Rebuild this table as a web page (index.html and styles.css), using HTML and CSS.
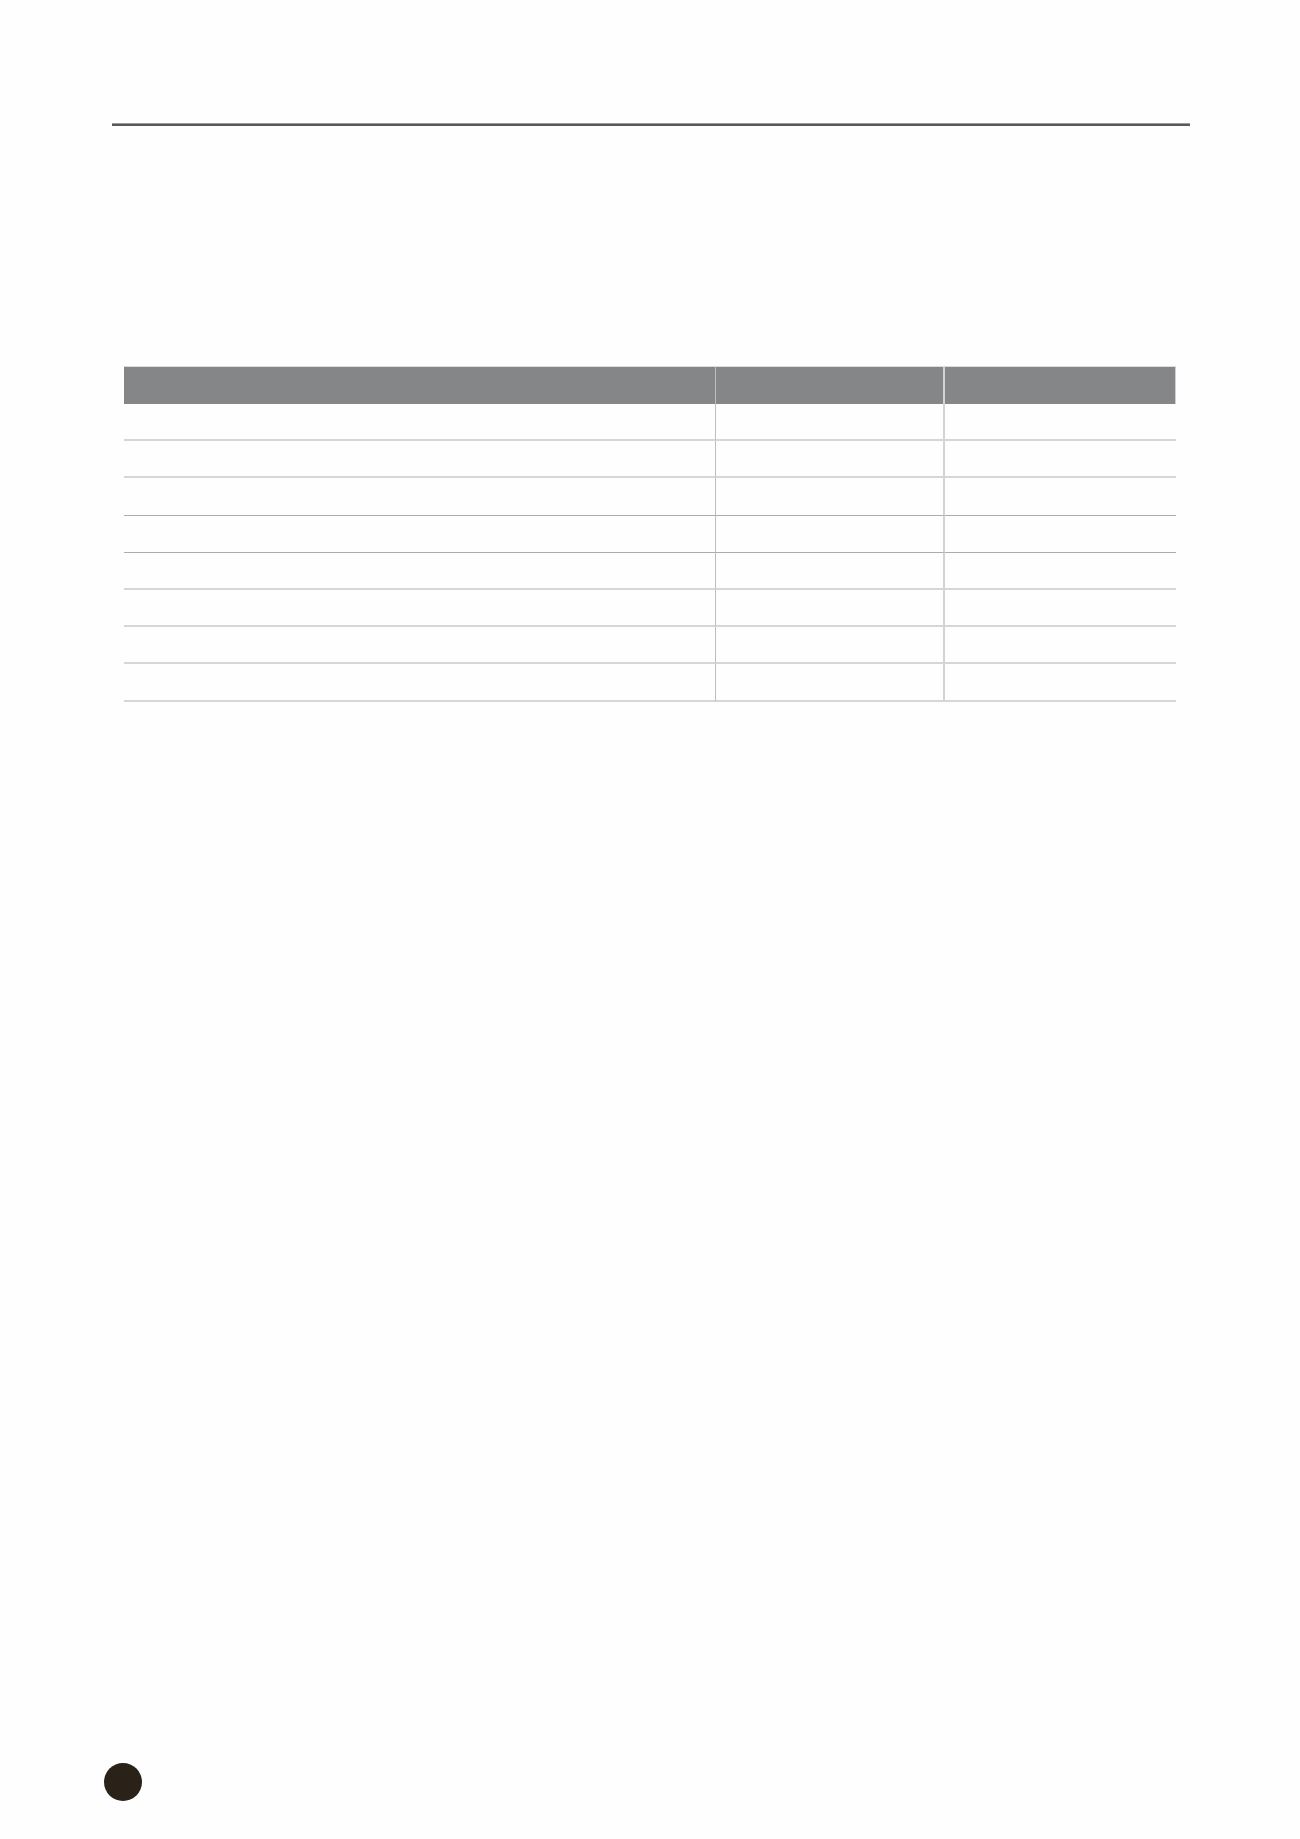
FILE: index.html
```html
<!DOCTYPE html>
<html lang="en">
<head>
<meta charset="utf-8">
<title>Page</title>
<link rel="stylesheet" href="styles.css">
</head>
<body>
<div class="page">
  <div class="top-rule"></div>
  <table class="data-table">
    <thead>
      <tr><th class="c1"></th><th class="c2"></th><th class="c3"></th></tr>
    </thead>
    <tbody>
      <tr><td class="c1"></td><td class="c2"></td><td class="c3"></td></tr>
      <tr><td class="c1"></td><td class="c2"></td><td class="c3"></td></tr>
      <tr class="dark"><td class="c1"></td><td class="c2"></td><td class="c3"></td></tr>
      <tr class="dark"><td class="c1"></td><td class="c2"></td><td class="c3"></td></tr>
      <tr><td class="c1"></td><td class="c2"></td><td class="c3"></td></tr>
      <tr><td class="c1"></td><td class="c2"></td><td class="c3"></td></tr>
      <tr><td class="c1"></td><td class="c2"></td><td class="c3"></td></tr>
      <tr><td class="c1"></td><td class="c2"></td><td class="c3"></td></tr>
    </tbody>
  </table>
  <div class="footer">
    <span class="page-dot"></span>
  </div>
</div>
</body>
</html>
```

FILE: styles.css
```css
html, body {
  margin: 0;
  padding: 0;
  background: #fefefe;
  font-family: "Liberation Sans", Arial, sans-serif;
}

.page {
  display: flex;
  flex-direction: column;
  min-height: 1839px;
  box-sizing: border-box;
}

.top-rule {
  margin: 124px 0 0 112px;
  width: 1078px;
  height: 2px;
  background: #595959;
  box-shadow: 0 -1px 0 #9a9a9a;
}

.data-table {
  margin: 240px 0 0 124px;
  width: 1052px;
  border-collapse: separate;
  border-spacing: 0;
  table-layout: fixed;
}

.data-table th,
.data-table td {
  padding: 0;
}

.data-table th {
  height: 38px;
  box-sizing: border-box;
  background: #858687;
  border-top: 1px solid #dcdcdc;
}

.data-table th.c3 {
  border-right: 1px solid #d0d0d0;
}

.data-table .c1 {
  width: 592px;
  border-right: 1px solid #bdbdbd;
}

.data-table .c2 {
  width: 229px;
  border-right: 2px solid #d3d3d3;
}

.data-table tbody tr {
  height: 37.2px;
}

.data-table td {
  border-bottom: 2px solid #d6d6d6;
}

.data-table tr.dark td {
  border-bottom: 1px solid #acacac;
}

.footer {
  margin-top: auto;
  padding: 0 0 38px 104px;
}

.page-dot {
  display: block;
  width: 38px;
  height: 38px;
  border-radius: 50%;
  background: #2a2118;
}
```
